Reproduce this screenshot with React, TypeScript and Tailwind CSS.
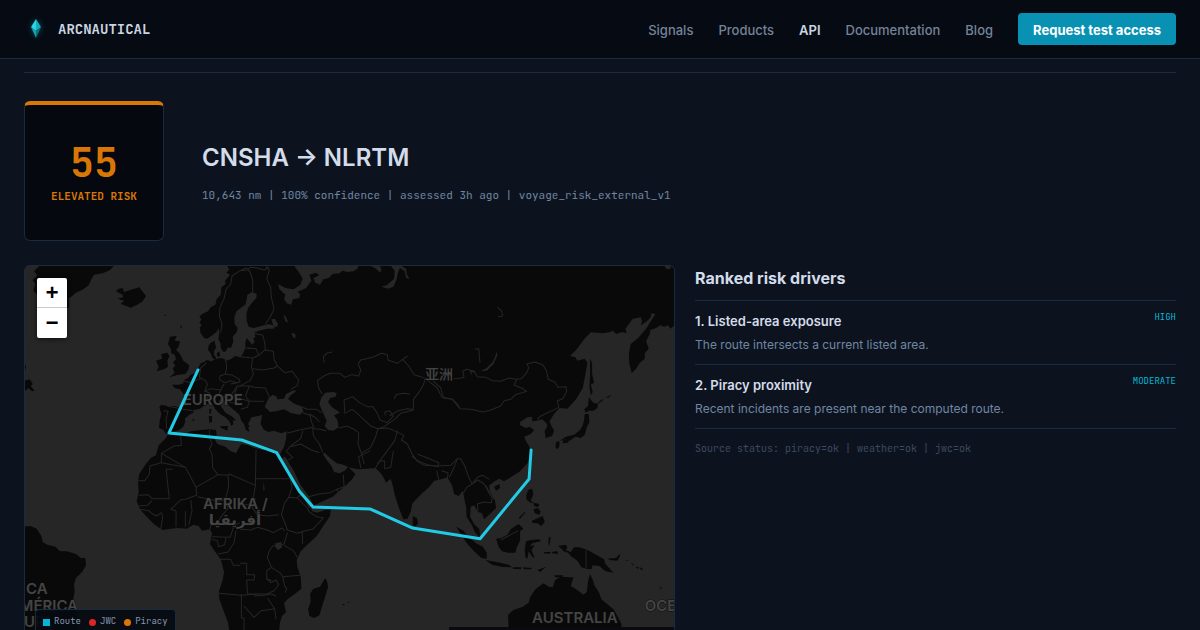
import { clsx } from "clsx";

const navLinks = [
  { label: "Signals", href: "#signals" },
  { label: "Products", href: "#products" },
  { label: "API", href: "#api", active: true },
  { label: "Documentation", href: "#documentation" },
  { label: "Blog", href: "#blog" },
];

const drivers = [
  {
    title: "1. Listed-area exposure",
    detail: "The route intersects a current listed area.",
    level: "HIGH",
  },
  {
    title: "2. Piracy proximity",
    detail: "Recent incidents are present near the computed route.",
    level: "MODERATE",
  },
];

const legend = [
  { label: "Route", swatch: "bg-[#06b6d4]" },
  { label: "JWC", swatch: "bg-[#dc2626] rounded-full" },
  { label: "Piracy", swatch: "bg-[#d97706] rounded-full" },
];

// Mainlands, traced clockwise or not as was handy
const land = [
  // Europe + Asia
  "M608 0 615 18 607 26 618 32 603 50 605 60 592 70 590 92 578 105 574 122 560 130 552 142 534 150 526 158 532 166 526 176 533 182 527 192 530 208 540 222 550 224 566 213 578 203 583 192 586 208 583 225 590 240 590 252 598 264 606 262 610 252 622 250 628 232 626 218 638 204 641 192 632 180 631 158 638 142 652 130 664 122 668 106 670 92 684 84 698 90 697 102 684 116 672 132 667 150 668 172 674 188 690 192 712 186 734 180 752 186 750 194 730 194 704 200 690 206 694 218 688 224 692 234 684 242 676 232 668 222 664 234 664 252 656 270 648 280 634 276 622 284 608 290 600 284 586 282 572 288 564 280 560 268 552 258 554 244 560 236 572 230 573 240 577 250 570 260 570 272 578 284 562 292 548 288 540 294 530 298 524 308 516 326 500 332 492 342 480 348 478 358 466 362 444 362 452 372 468 376 478 390 486 408 482 424 470 432 452 426 430 426 412 422 406 430 412 450 407 470 405 492 418 497 426 510 436 507 452 502 466 498 478 488 484 472 482 464 496 452 508 446 508 438 528 434 542 424 556 418 566 420 574 436 588 450 604 460 616 472 622 486 628 480 626 470 636 468 622 456 604 446 592 428 584 412 590 404 604 412 616 426 634 442 646 452 652 470 660 480 666 498 676 504 672 488 686 490 680 474 690 460 704 456 714 452 712 468 708 484 716 494 732 504 750 500 772 508 788 502 786 524 780 548 768 570 778 600 800 636 822 676 838 706 858 730 870 724 896 712 926 698 946 680 966 664 984 646 994 630 978 614 973 608 962 620 946 628 930 624 922 606 908 588 896 570 902 566 918 582 938 598 958 602 974 610 1000 616 1030 614 1054 612 1070 628 1078 640 1086 656 1100 644 1106 664 1112 692 1124 730 1138 766 1150 764 1160 744 1164 720 1174 708 1196 686 1216 668 1230 650 1252 646 1270 640 1284 664 1290 690 1304 696 1316 680 1320 700 1326 730 1328 760 1344 784 1352 804 1368 822 1366 796 1350 780 1338 758 1340 728 1350 724 1362 744 1374 748 1380 766 1400 748 1416 732 1412 706 1396 682 1396 664 1412 652 1426 644 1440 652 1466 636 1488 622 1510 598 1520 570 1516 548 1508 536 1500 518 1520 510 1530 498 1516 488 1506 492 1488 484 1488 474 1510 460 1524 458 1524 472 1538 470 1554 466 1566 476 1570 486 1562 500 1564 522 1584 516 1590 500 1582 486 1576 472 1590 450 1606 432 1630 434 1656 406 1676 372 1684 330 1690 296 1682 284 1660 290 1654 280 1638 276 1658 256 1680 226 1700 205 1736 208 1758 204 1766 200 1776 210 1794 204 1808 208 1804 194 1826 164 1850 160 1854 172 1850 184 1868 172 1880 160 1882 148 1894 150 1884 166 1866 194 1842 222 1820 240 1814 270 1816 300 1823 328 1836 314 1846 298 1862 284 1862 268 1874 254 1866 232 1878 208 1878 198 1896 192 1908 184 1920 188 1932 184 1940 194 1956 178 1956 0Z",
  // Africa
  "M400 558 404 544 424 524 434 509 452 514 476 512 500 502 530 498 556 496 576 498 578 512 572 526 580 540 604 548 620 562 636 568 644 552 652 540 672 544 692 552 716 558 740 558 758 560 768 590 788 624 804 656 822 682 842 706 860 730 864 742 880 746 904 738 920 736 918 756 900 782 878 816 852 840 830 862 818 888 820 910 830 938 832 974 812 990 790 1006 780 1018 786 1044 774 1056 768 1074 760 1150 624 1150 612 1076 600 1044 586 1006 584 984 596 948 600 924 590 886 572 862 558 840 562 820 564 806 556 796 534 800 524 786 508 782 488 794 462 792 440 794 416 798 392 782 368 758 348 736 338 712 344 684 342 652 346 630 364 602 380 582 396 574Z",
  // South America
  "M0 788 20 786 38 794 52 816 56 834 70 842 94 848 108 862 128 862 156 870 170 882 184 882 186 904 176 922 156 942 150 960 152 984 146 1010 160 1050 168 1150 0 1150Z",
  // Australia
  "M1458 1150 1454 1104 1452 1052 1468 1038 1496 1028 1514 1016 1518 1000 1534 976 1558 958 1574 968 1586 970 1592 950 1602 942 1612 938 1636 940 1648 940 1640 966 1656 976 1678 992 1688 984 1692 950 1698 930 1706 948 1712 966 1724 984 1732 1006 1752 1022 1768 1036 1782 1060 1792 1080 1794 1150Z",
  // Greenland
  "M46 6 270 6 258 18 236 28 210 32 202 46 194 64 178 76 156 86 134 104 136 128 120 140 110 126 98 118 76 100 40 92 28 80 34 60 26 48 40 34 30 22Z",
];

const islands = [
  "M284 74 296 72 300 84 312 80 326 76 346 70 354 80 366 96 356 112 340 122 320 131 302 124 290 120 300 110 280 104 298 100 296 92 276 82Z",
  "M438 218 458 216 452 230 468 232 464 248 456 258 468 270 478 290 496 304 494 316 484 330 462 332 436 340 452 326 446 314 454 304 446 296 456 286 452 272 442 268 440 254 432 240Z",
  "M412 270 430 266 436 276 430 290 432 308 420 316 398 322 404 308 396 290 414 284Z",
  "M0 294 6 306 4 318 0 320Z M0 350 18 346 26 360 20 366 32 380 24 382 12 372 6 380 0 372Z",
  "M588 486 612 486 610 500 592 492Z M554 456 564 456 564 474 556 476Z M556 434 562 436 560 450 556 448Z",
  "M578 268 586 262 588 276 580 278Z M504 466 512 466 508 472Z M470 184 473 184 472 194 469 192Z",
  // Madagascar and Sri Lanka
  "M904 942 910 956 912 970 906 990 898 1014 886 1054 870 1062 856 1056 852 1036 860 1012 858 990 868 974 888 968 898 952Z",
  "M1166 756 1178 762 1182 778 1174 788 1166 782Z",
  // Sumatra and Java
  "M1296 788 1318 800 1334 820 1356 838 1376 848 1388 866 1388 884 1372 882 1350 862 1330 840 1312 812Z M1384 888 1404 892 1428 896 1454 902 1464 910 1432 908 1404 902Z M1466 910 1492 910 1490 916 1466 914Z M1496 910 1524 912 1520 916 1500 916Z M1540 918 1566 908 1548 924Z",
  // Borneo and Sulawesi
  "M1416 824 1432 822 1450 812 1460 796 1474 786 1484 780 1498 794 1488 802 1488 830 1478 850 1474 866 1452 866 1434 862 1424 850Z",
  "M1506 832 1520 828 1546 826 1550 832 1524 838 1518 846 1532 844 1522 858 1532 882 1524 878 1514 862 1510 884 1504 880 1502 858Z M1574 820 1580 820 1576 846 1573 838Z M1560 864 1580 864 1576 870 1560 868Z M1582 864 1600 862 1602 870 1586 868Z",
  // New Guinea
  "M1602 846 1626 842 1630 852 1624 858 1640 864 1650 850 1666 850 1690 858 1716 872 1740 886 1744 900 1768 926 1744 922 1726 906 1706 904 1702 916 1688 914 1672 910 1660 890 1640 876 1632 866 1618 862 1614 856Z",
  "M1750 884 1776 882 1786 870 1788 876 1780 890 1758 888Z M1804 886 1812 890 1808 892Z M1820 896 1830 902 1826 904Z M1834 906 1846 912 1840 914Z M1848 910 1858 916 1850 918Z M1906 966 1914 974 1910 976Z",
  // Philippines
  "M1512 678 1524 674 1528 690 1520 710 1530 716 1520 716 1508 708 1506 696Z M1528 716 1546 720 1542 730 1530 726Z M1528 736 1540 732 1550 742 1546 752 1532 748Z M1524 770 1542 762 1556 756 1562 774 1552 786 1540 778 1524 776Z M1484 762 1504 742 1502 748 1488 764Z",
  "M1410 668 1426 660 1428 672 1416 680Z M1590 934 1618 934 1614 940 1594 940Z",
  // Japan and Sakhalin
  "M1694 450 1696 474 1688 490 1682 512 1670 522 1654 518 1636 530 1624 526 1606 530 1626 518 1650 512 1668 498 1676 484 1680 468 1682 450Z M1596 534 1606 532 1606 546 1600 556 1594 550Z M1616 528 1636 524 1632 536 1616 538Z",
  "M1694 400 1708 416 1722 420 1720 432 1708 440 1694 440 1686 446 1680 436 1692 426Z",
  "M1698 284 1704 298 1704 330 1710 356 1700 362 1706 384 1700 394 1696 370 1698 330Z",
  "M1726 412 1738 404 1734 412 1720 420Z M1746 400 1762 392 1752 402Z",
  "M956 1020 961 1020 961 1024 956 1024Z M972 1013 975 1013 974 1017 972 1017Z M422 152 426 152 426 156 422 156Z",
];

// Inland seas and northern inlets
const water = [
  "M806 0 824 24 836 44 828 64 808 76 784 72 762 60 766 76 784 92 780 106 788 118 802 122 806 106 826 102 828 90 820 84 846 72 862 50 856 32 876 26 886 34 868 42 874 56 888 62 898 46 914 42 926 30 946 28 956 20 970 24 988 22 1000 14 1004 0Z",
  "M1028 0 1056 14 1068 26 1072 18 1066 0Z",
  "M1096 0 1112 20 1110 44 1088 64 1072 68 1092 74 1108 68 1118 46 1122 24 1128 12 1142 22 1146 42 1156 44 1148 30 1146 14 1132 6Z",
  // Black Sea
  "M722 428 734 402 746 392 758 398 760 406 780 404 786 390 810 378 816 382 800 394 792 404 806 416 834 430 838 442 828 452 802 448 780 436 756 442 738 444Z",
  // Caspian
  "M892 400 904 386 928 384 938 388 934 398 918 402 912 414 924 430 940 440 948 446 930 454 940 468 944 490 928 500 912 498 902 486 908 470 894 440 886 420Z",
  // Aegean
  "M682 460 704 456 708 478 718 494 708 504 686 500 672 480Z",
  "M742 166 752 164 762 180 758 190 748 186Z M778 152 786 158 792 176 784 172Z M802 206 814 210 814 224 806 218Z",
  "M754 838 772 834 774 850 762 858 754 850Z",
  "M1418 262 1420 274 1408 300 1388 320 1370 322 1388 312 1406 294 1414 276Z",
  "M1918 0 1942 8 1936 16 1926 14Z",
  "M718 652 722 676 718 680Z",
];

const borders = [
  // Scandinavia and northern Russia
  "M590 206 594 180 586 156 588 130 600 104 606 76 620 60 624 36 648 20 666 12 678 24 686 48 686 84",
  "M722 0 736 20 728 44 740 70 742 100 750 136 738 160 724 180",
  "M650 20 668 18 680 10 700 12 720 18 734 10",
  // Central Europe
  "M648 278 686 282 704 274 696 254 672 252 M686 282 682 308 688 330 678 350 648 366",
  "M704 274 722 258 748 262 750 286 760 306 750 312 716 318 684 314",
  "M690 208 716 214 722 236 724 258 M664 252 696 254",
  "M760 306 782 326 804 322 824 348 820 364 800 376",
  "M604 284 608 310 604 330 588 336 586 346 602 356 620 350 640 358 M604 330 626 334 646 346 648 354 620 360",
  "M548 296 530 312 526 340 544 350 550 360 542 382 556 386 548 410 M478 350 500 356 530 344",
  "M542 382 560 374 590 378 600 360 M590 378 584 392 600 398 622 392 640 366 676 366 690 370 724 372 736 400",
  "M640 366 630 394 640 410 656 406 676 412 720 412 M676 366 664 396 676 412 670 430 650 436 M600 398 620 416 634 418",
  "M418 440 432 442 426 466 428 494 M430 426 476 436 506 440",
  // Central Asia
  "M894 390 884 372 880 350 900 336 918 328 948 328 962 340 984 332 1004 336 1010 318 1002 300 1010 288 1046 280 1072 268 1090 272 1092 288 1120 298 1136 286 1150 276",
  "M1136 286 1154 306 1170 332 1190 338 1204 344 1198 362 1184 386 1168 406 1168 438 1130 448 1112 466",
  "M962 448 960 408 986 398 1006 416 1030 428 1046 428 1060 448 1068 468 1090 476 1108 456 1096 440 1082 444 1084 454",
  "M962 448 984 436 1000 448 1020 468 1040 486 1062 494 M1062 494 1080 488 1112 466",
  "M944 492 968 486 990 496 1004 506 1002 540 1012 568 1020 600",
  "M1096 456 1122 440 1150 434 1166 436 M1110 404 1116 392 1136 388 1158 390",
  "M1062 494 1092 492 1110 500 1140 514 1132 528 1150 540 1164 570 1180 592 1200 604 1240 606 1280 604 1300 584",
  "M1062 494 1054 520 1040 550 1012 568 M1120 500 1112 530 1090 560 1060 600",
  "M900 296 898 278 908 268 924 264",
  // Western China
  "M1204 344 1240 372 1252 398 1284 406 1308 434",
  // Mongolia and Manchuria
  "M1288 344 1300 344 1320 340 1316 322 1328 316 1350 322 1360 338 1386 340 1404 350 1430 352 1454 342 1478 346 1470 364 1492 372 1508 382 1474 392 1460 406 1440 410 1430 426 1400 438 1376 444 1340 436 1308 434 1300 420 1286 406 1258 402 1250 372 1226 350",
  "M1478 346 1492 344 1508 326 1514 310 1508 300 1532 294 1556 302 1568 322 1572 346 1592 354 1602 370 1626 368 1628 382 1616 404 1600 410 1604 430 1580 442 1550 456 1540 466",
  "M1352 256 1364 254 1366 276 1368 296 M1342 332 1340 322 1354 324 M1420 130 1432 140 1436 156 1422 158",
  // Turkey and Middle East
  "M820 424 850 436 876 436 894 446 M836 446 858 454 862 472 870 494 888 496 906 500",
  "M856 450 876 462 886 474 M790 508 816 500 846 494 866 490 M836 500 830 524 800 546 786 562",
  "M866 492 868 516 886 540 896 566 M800 548 830 540 862 558 886 566 M786 562 806 580 790 590",
  "M846 716 854 698 884 690 918 686 938 676 946 690 M938 676 960 668 958 632",
  "M820 700 838 686",
  // South Asia
  "M1010 612 1004 578 1040 560 M1054 612 1068 590 1082 592 1082 614 1100 610 1108 560",
  "M1164 576 1180 590 1210 602 1242 608 1244 596 1210 582 1180 570 M1238 620 1244 648 M1252 620 1272 626 1270 648 M1300 584 1290 610 1276 640",
  "M1300 584 1310 584 1322 606 1334 640 1344 660 1328 670 1318 688 M1344 660 1362 648 1380 660 1392 680 1404 700 1402 716 1380 714 1360 720 1362 742 M1344 660 1360 640 1376 634 1396 646",
  "M1386 664 1396 690 1412 706 M1430 828 1460 812 1482 800 M1686 858 1686 912",
  // North Africa
  "M412 568 484 610 516 670 582 632 566 612 564 570 556 556 564 540 556 520 556 498 M412 596 378 606 376 630 362 650 342 650",
  "M484 610 412 596 412 568 450 546 472 544 470 516",
  "M426 616 436 704 384 704 372 692 344 694 M426 616 446 616 M516 670 518 694 484 706 470 708 440 736 456 740",
  "M582 632 612 634 614 668 604 706 584 712 520 698 M612 634 616 630 694 664 696 558",
  "M696 644 798 644 M694 664 688 700 676 722 662 722 M694 702 684 730 700 752 730 756 764 752",
  "M340 726 370 724 384 710 M348 736 374 740 386 750 398 756 412 746 416 760 410 796 M456 740 456 790 M484 742 484 788 M500 708 504 740 494 784",
  "M604 706 612 732 590 760 580 780 560 782 558 798 M564 818 618 820 630 786 648 776",
  "M648 796 680 798 700 790 730 798 748 806 774 792 782 800",
  "M798 644 804 670 794 700 782 716 772 752 784 780 790 798 820 808 844 800 866 796 898 762 878 758 856 744 850 732 M794 700 820 702 850 732",
  "M834 800 836 840 M790 806 780 840 746 846 736 860 730 880 742 910 728 920 728 944 742 950",
  "M780 844 808 860 820 880 M742 910 770 928 776 938 828 934 M728 944 740 956 756 948 764 962 750 980 728 990 670 990 668 948 690 948 692 932 668 932 668 898 648 898",
  "M584 886 620 886 628 904 648 904 M584 988 650 994 700 990 M652 990 652 1062 660 1062 660 1120 M660 1026 690 1060 712 1040 752 1034 730 1002 M752 1034 756 1066 M776 938 782 966 788 972 784 986 M690 996 720 994 742 990 756 996",
  "M564 826 580 830 584 848 602 842 606 820 M582 870 612 864 630 836 636 800",
];

const labels = [
  { text: "EUROPE", x: 476, y: 422 },
  { text: "AFRIKA /", x: 537, y: 734 },
  { text: "AUSTRALIA", x: 1524, y: 1076 },
  { text: "OCEANIA", x: 1862, y: 1040 },
  { text: "CA", x: 6, y: 990 },
  { text: "AMÉRICA", x: -46, y: 1040 },
  { text: "UR", x: 0, y: 1088 },
];

function Logo() {
  return (
    <svg viewBox="0 0 24 24" className="size-6 drop-shadow-[0_0_3px_rgba(6,182,212,0.4)]" aria-hidden="true">
      <path d="M12 2v12l-5-4z" fill="#2dd4e4" />
      <path d="M12 2l5 8-5 4z" fill="#17abbb" />
      <path d="M7 10l5 4v7z" fill="#16a0b0" />
      <path d="M17 10l-5 4v7z" fill="#0d7281" />
    </svg>
  );
}

function Header() {
  return (
    <header className="flex items-center justify-between border-b border-[#1a2a3f] bg-[#060a12] px-6 py-[13px]">
      <a href="#home" className="flex items-center gap-[10px] font-['JetBrains_Mono','DejaVu_Sans_Mono',monospace] text-sm font-bold text-[#cbd5e1]">
        <Logo />
        ARCNAUTICAL
      </a>
      <nav className="flex items-center gap-[25px] text-[13px] leading-[22px] font-medium text-[#748399]">
        {navLinks.map((link) => (
          <a key={link.label} href={link.href} className={clsx("pt-px", link.active && "font-semibold text-[#cbd5e1]")}>
            {link.label}
          </a>
        ))}
        <a href="#access" className="flex h-8 items-center rounded bg-[#0891b2] px-[15px] pt-px font-bold text-white">
          Request test access
        </a>
      </nav>
    </header>
  );
}

function RouteMap() {
  return (
    <section
      aria-label="Route map"
      className="relative h-[381px] overflow-hidden rounded-md border border-[#1a2a3f] bg-[#262626]"
    >
      <svg viewBox="3 6 1947 1137" preserveAspectRatio="xMidYMid slice" className="size-full">
        <g fill="#090909">
          {[...land, ...islands].map((d) => (
            <path key={d} d={d} />
          ))}
        </g>
        <g fill="#262626">
          {water.map((d) => (
            <path key={d} d={d} />
          ))}
        </g>
        {/* Red Sea */}
        <path d="M776 582 800 620 822 666 848 702 862 728" fill="none" stroke="#262626" strokeWidth="16" />
        <g fill="none" stroke="#262626" strokeWidth="3" strokeLinejoin="round">
          {borders.map((d) => (
            <path key={d} d={d} />
          ))}
        </g>
        <g fill="#444444" stroke="#0d0d0d" strokeWidth="3" paintOrder="stroke" fontSize="45" className="font-semibold">
          {labels.map((label) => (
            <text key={label.text} x={label.x} y={label.y}>
              {label.text}
            </text>
          ))}
          <text x="633" y="782" textAnchor="middle" className="font-['DejaVu_Sans',sans-serif] font-bold">
            أفريقيا
          </text>
          <text x="1203" y="345" fontSize="42" className="font-['Noto_Sans_CJK_SC',sans-serif] font-medium">
            亚洲
          </text>
        </g>
        <path
          d="M522 318 435 507 653 528 758 566 826 682 867 729 1039 735 1166 792 1368 824 1515 645 1521 558"
          fill="none"
          stroke="#22cbe5"
          strokeWidth="9"
          strokeLinecap="round"
          strokeLinejoin="round"
        />
        <rect x="1275" y="1089" width="675" height="54" fill="#0a0a10" />
      </svg>

      <div className="absolute top-3 left-3 flex w-[30px] flex-col overflow-hidden rounded-xs bg-white font-['Liberation_Mono',monospace] text-[22px] leading-[26px] font-bold text-black shadow-[0_1px_5px_rgba(0,0,0,0.65)]">
        <button type="button" aria-label="Zoom in" className="h-[30px] border-b border-[#cccccc] pt-1">
          +
        </button>
        <button type="button" aria-label="Zoom out" className="h-[30px] pt-1">
          −
        </button>
      </div>

      <ul className="absolute bottom-[10px] left-[10px] flex gap-2 rounded-sm border border-[#1a2a3f] bg-[#060a12]/90 px-[7px] pt-[3px] pb-[5px] font-['JetBrains_Mono','DejaVu_Sans_Mono',monospace] text-[9px] leading-4 text-[#8595ad]">
        {legend.map((item) => (
          <li key={item.label} className="flex items-center gap-1">
            <span className={clsx("mt-[3px] size-[7px]", item.swatch)} />
            {item.label}
          </li>
        ))}
      </ul>
    </section>
  );
}

function RiskDrivers() {
  return (
    <section>
      <h2 className="border-b border-[#1a2a3f] pt-px pb-[10px] text-base leading-6 font-bold text-[#d3dcea]">
        Ranked risk drivers
      </h2>
      <ul>
        {drivers.map((driver) => (
          <li key={driver.title} className="flex items-start justify-between border-b border-[#1a2a3f] pt-[9px] pb-[10px]">
            <div>
              <h3 className="text-[13px] leading-[22px] font-semibold text-[#d3dcea]">{driver.title}</h3>
              <p className="mt-[3px] text-xs leading-[19px] text-[#6f86a3]">{driver.detail}</p>
            </div>
            <span className="font-['JetBrains_Mono','DejaVu_Sans_Mono',monospace] text-[9px] leading-[14px] text-[#06b6d4]">
              {driver.level}
            </span>
          </li>
        ))}
      </ul>
      <p className="mt-3 font-['JetBrains_Mono','DejaVu_Sans_Mono',monospace] text-[10px] leading-4 text-[#3b4a61]">
        Source status: piracy=ok | weather=ok | jwc=ok
      </p>
    </section>
  );
}

export default function App() {
  return (
    <div className="min-h-screen bg-[#0d131e] font-['Inter',sans-serif]">
      <Header />
      <main className="px-6 pt-[13px]">
        <div className="flex items-center gap-[38px] border-t border-[#1a2a3f] py-7">
          <div className="flex size-[140px] flex-col items-center justify-center rounded-md border border-t-4 border-[#1a2a3f] border-t-[#d97706] bg-[#05080f] pt-0.5 font-['JetBrains_Mono','DejaVu_Sans_Mono',monospace] font-bold text-[#d97706]">
            <span className="text-[40px] leading-10">55</span>
            <span className="mt-1 text-[11px] leading-[18px]">ELEVATED RISK</span>
          </div>
          <div className="pt-0.5">
            <h1 className="text-2xl leading-9 font-semibold text-[#d3dcea]">CNSHA → NLRTM</h1>
            <p className="mt-[10px] font-['JetBrains_Mono','DejaVu_Sans_Mono',monospace] text-[11px] leading-[18px] text-[#6f86a3]">
              10,643 nm | 100% confidence | assessed 3h ago | voyage_risk_external_v1
            </p>
          </div>
        </div>
        <div className="-mt-1 grid grid-cols-[1.354fr_1fr] gap-5">
          <RouteMap />
          <RiskDrivers />
        </div>
      </main>
    </div>
  );
}
